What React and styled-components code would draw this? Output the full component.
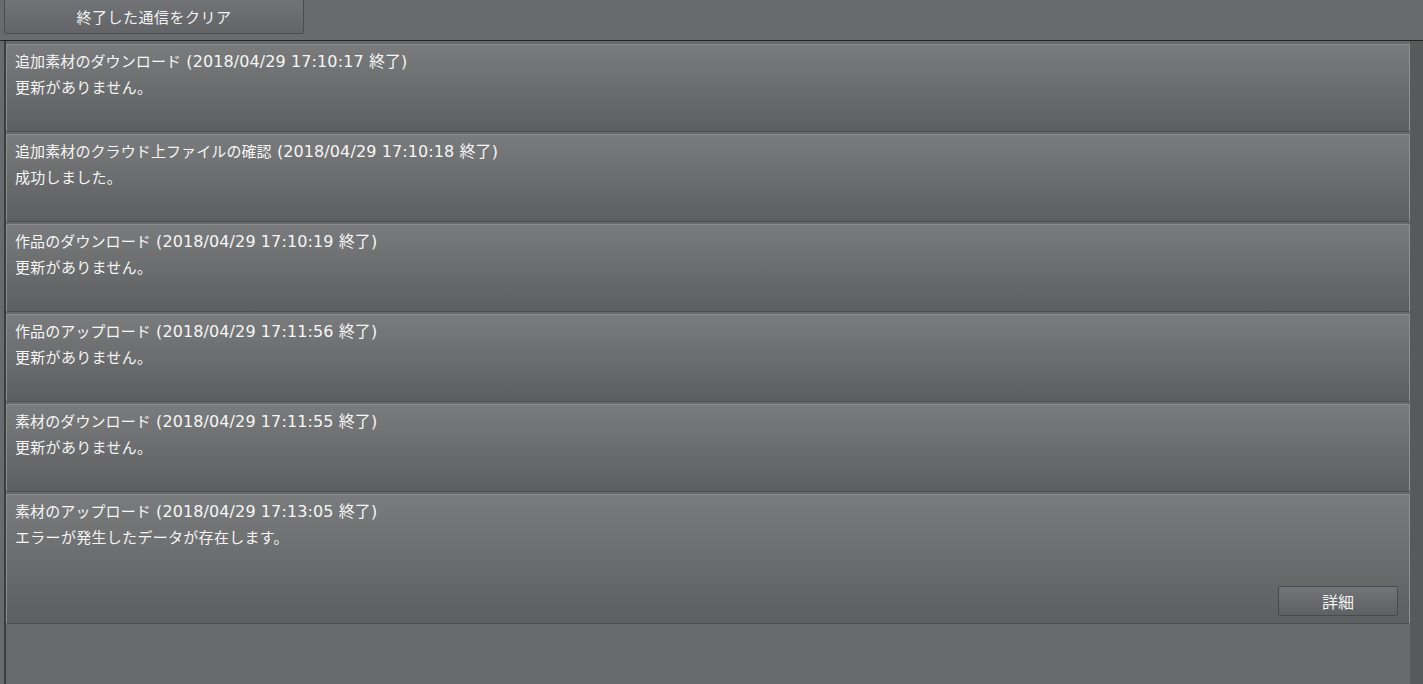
import React from 'react'
import styled, { createGlobalStyle } from 'styled-components'

const GlobalStyle = createGlobalStyle`
  html, body {
    margin: 0;
    padding: 0;
    background: #696a6e;
    font-family: "Noto Sans CJK JP", "Noto Sans", sans-serif;
    overflow: hidden;
  }
`

const logs = [
  { name: '追加素材のダウンロード', time: '2018/04/29 17:10:17', msg: '更新がありません。' },
  { name: '追加素材のクラウド上ファイルの確認', time: '2018/04/29 17:10:18', msg: '成功しました。' },
  { name: '作品のダウンロード', time: '2018/04/29 17:10:19', msg: '更新がありません。' },
  { name: '作品のアップロード', time: '2018/04/29 17:11:56', msg: '更新がありません。' },
  { name: '素材のダウンロード', time: '2018/04/29 17:11:55', msg: '更新がありません。' },
  { name: '素材のアップロード', time: '2018/04/29 17:13:05', msg: 'エラーが発生したデータが存在します。', detail: true },
]

function App() {
  return (
    <Main>
      <GlobalStyle />
      <Toolbar>
        <ToolButton>終了した通信をクリア</ToolButton>
      </Toolbar>
      <Body>
        <List>
          {logs.map((log) => (
            <Card key={log.name} $tall={log.detail}>
              <Title>
                {log.name}
                <Stamp> ({log.time} 終了)</Stamp>
              </Title>
              <Message>{log.msg}</Message>
              {log.detail && (
                <Footer>
                  <DetailButton>詳細</DetailButton>
                </Footer>
              )}
            </Card>
          ))}
        </List>
        <Track />
      </Body>
    </Main>
  )
}

export default App

const Main = styled.div`
  width: 1423px;
  height: 684px;
  display: flex;
  flex-direction: column;
  background: #696a6e;
`

const Toolbar = styled.div`
  height: 41px;
  flex-shrink: 0;
  padding-left: 4px;
  border-bottom: 1px solid #242426;
  box-sizing: border-box;
  background: #696a6e;
`

const ToolButton = styled.button`
  width: 300px;
  height: 35px;
  margin-top: -1px;
  border: 1px solid #4b4c4f;
  border-radius: 2px;
  background: linear-gradient(#727376, #636467);
  color: #f2f2f2;
  font-family: "Noto Sans CJK JP", "Noto Sans", sans-serif;
  font-size: 15px;
  letter-spacing: 0.5px;
  padding: 0;
  display: block;
`

const Body = styled.div`
  flex: 1;
  display: flex;
  min-height: 0;
`

const List = styled.div`
  flex: 1;
  margin-left: 4px;
  border-left: 2px solid #3c3d3f;
  padding-top: 3px;
  display: flex;
  flex-direction: column;
  gap: 2px;
  background: #68696d;
`

const Card = styled.div`
  height: ${(p) => (p.$tall ? '130px' : '88px')};
  flex-shrink: 0;
  box-sizing: border-box;
  display: flex;
  flex-direction: column;
  padding: 2px 11px 7px 8px;
  border: 1px solid;
  border-color: #8b8c8e #8f9092 #4e4f51 #8c8d8f;
  background: linear-gradient(#7a7b7d, #5d5e60);
  color: #f6f6f6;
  font-size: 15px;
  line-height: 27px;
`

const Title = styled.div`
  height: 26px;
  white-space: nowrap;
  letter-spacing: 0.1px;
`

const Stamp = styled.span`
  font-family: "DejaVu Sans", "Noto Sans CJK JP", sans-serif;
  font-size: 16px;
  line-height: 1;
`

const Message = styled.div`
  height: 27px;
  white-space: nowrap;
  letter-spacing: 0.3px;
`

const Footer = styled.div`
  margin-top: auto;
  display: flex;
  justify-content: flex-end;
`

const DetailButton = styled.button`
  width: 120px;
  height: 30px;
  border: 1px solid #48494b;
  border-radius: 2px;
  background: linear-gradient(#737477, #5f6063);
  color: #f2f2f2;
  font-family: "Noto Sans CJK JP", "Noto Sans", sans-serif;
  font-size: 16px;
  padding: 0;
`

const Track = styled.div`
  width: 13px;
  flex-shrink: 0;
  background: #58595b;
`
